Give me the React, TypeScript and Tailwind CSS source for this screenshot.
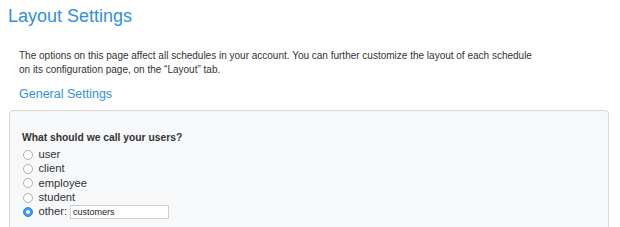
import React from "react";

const options = ["user", "client", "employee", "student"];

function Radio({ checked }: { checked?: boolean }) {
  if (checked) {
    return (
      <span className="inline-flex items-center justify-center w-[10px] h-[10px] rounded-full bg-[#3b97f6] border border-[#2f88ea] shrink-0">
        <span className="w-[4px] h-[4px] rounded-full bg-white" />
      </span>
    );
  }
  return (
    <span className="inline-block w-[10px] h-[10px] rounded-full bg-white border border-[#b0b0b0] shrink-0" />
  );
}

export default function App() {
  return (
    <div className="w-[620px] h-[227px] overflow-hidden bg-white font-['Liberation_Sans',Arial,sans-serif] text-[#333]">
      <h1 className="pl-[8px] pt-[5px] text-[18px] leading-[22px] text-[#3190e0]">Layout Settings</h1>
      <p className="pl-[19px] mt-[21.5px] text-[10px] leading-[14px] whitespace-nowrap text-[#333]">
        The options on this page affect all schedules in your account. You can further customize the layout of each schedule
        <br />
        on its configuration page, on the “Layout” tab.
      </p>
      <h2 className="pl-[19px] mt-[10.5px] text-[12.5px] leading-[15px] text-[#3190e0]">General Settings</h2>
      <div className="ml-[9px] mt-[8px] w-[600px] h-[140px] rounded-[4px] border border-[#d8d8d8] bg-[#f7f8fa] pl-[12px] pt-[20px]">
        <div className="text-[10.3px] leading-[13px] font-bold text-[#333]">What should we call your users?</div>
        <div className="mt-[3.5px] flex flex-col">
          {options.map((o) => (
            <label key={o} className="flex items-center h-[14.3px] text-[11.2px] leading-[13px]">
              <span className="ml-[1px] flex"><Radio /></span>
              <span className="ml-[5.5px]">{o}</span>
            </label>
          ))}
          <label className="flex items-center h-[14.3px] text-[11.2px] leading-[13px]">
            <span className="ml-[1px] flex"><Radio checked /></span>
            <span className="ml-[5.5px]">other:</span>
            <input
              readOnly
              value="customers"
              className="ml-[3px] w-[99px] h-[14px] bg-white border border-[#d0d0d0] text-[9px] leading-[12px] px-[2px] text-[#222] outline-none font-['Liberation_Sans',Arial,sans-serif]"
            />
          </label>
        </div>
      </div>
    </div>
  );
}
